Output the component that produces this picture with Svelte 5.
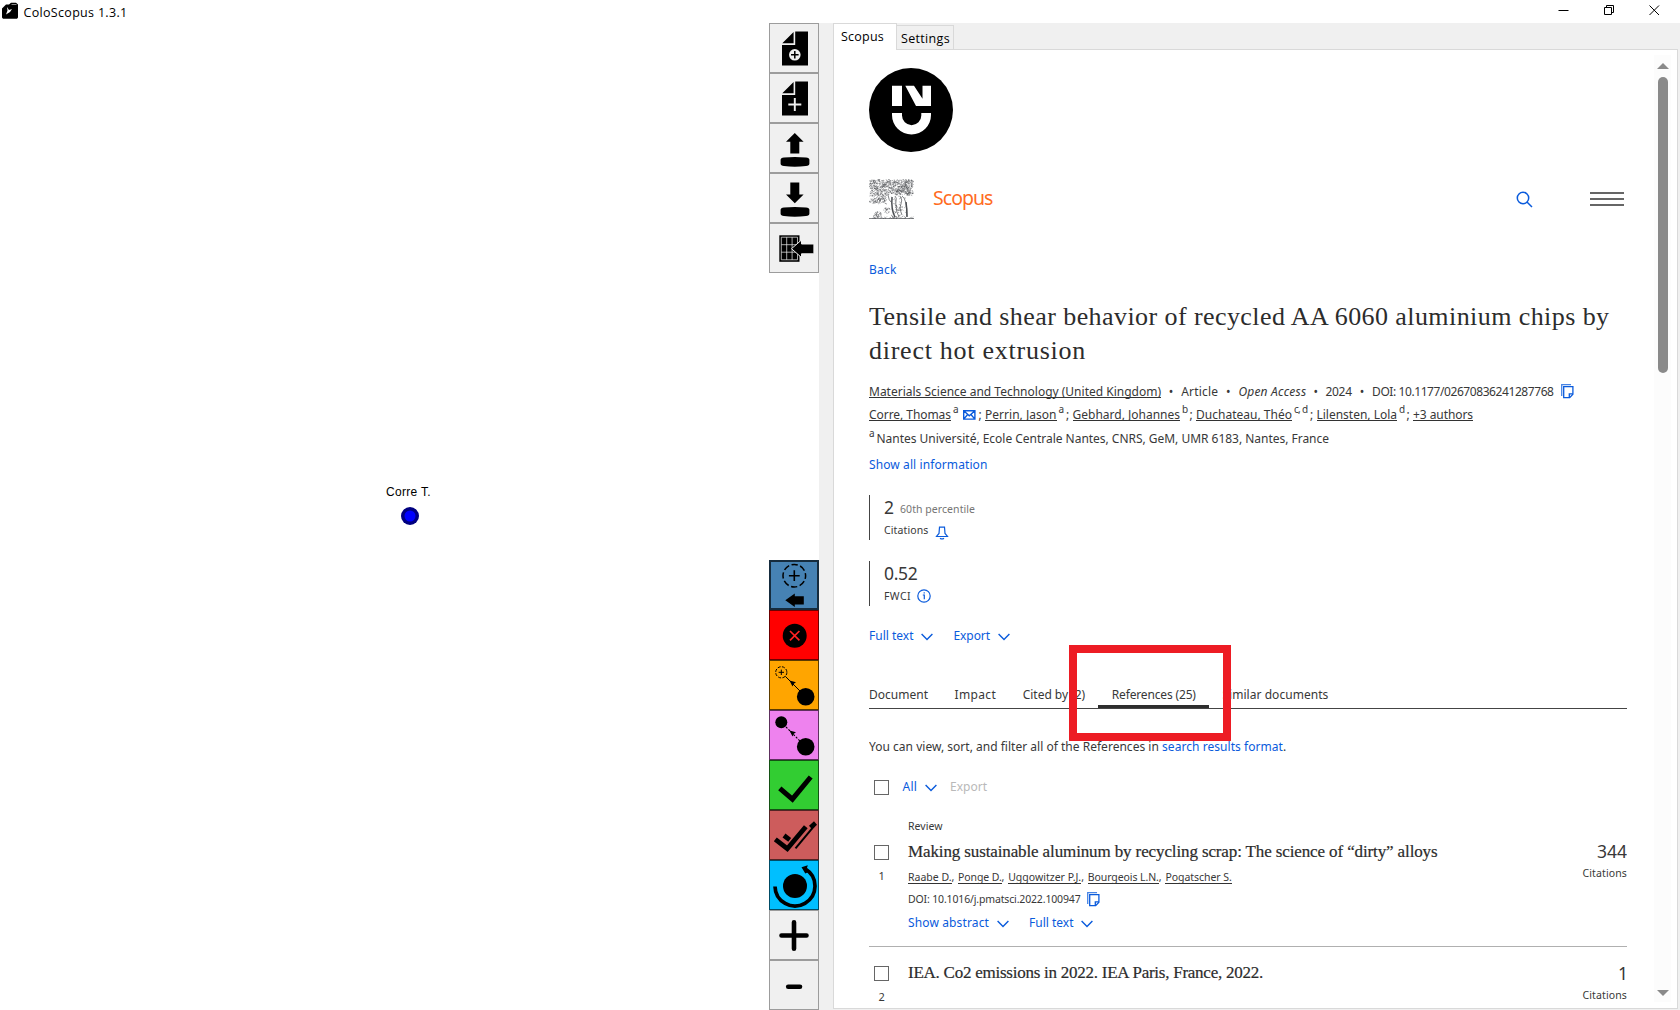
<script>
  // Spreads a label's letters so that it fills the given width.
  function fit(node, width) {
    const natural = node.getBoundingClientRect().width;
    const count = Array.from(node.textContent).length;
    node.style.letterSpacing = `${(width - natural) / count}px`;
    node.style.width = `${width}px`;
  }

  const fileTools = ['new', 'add', 'upload', 'download', 'import'];
  const graphTools = ['expand', 'remove', 'link', 'relink', 'check', 'checkall', 'reset', 'plus', 'minus'];

  const authors = [
    { name: 'Corre, Thomas', w: 82, sup: 'a', sw: 5, mail: true },
    { name: 'Perrin, Jason', w: 71.5, sup: 'a', sw: 5 },
    { name: 'Gebhard, Johannes', w: 107.5, sup: 'b', sw: 5 },
    { name: 'Duchateau, Théo', w: 96, sup: 'c, d', sw: 13.5 },
    { name: 'Lilensten, Lola', w: 80.5, sup: 'd', sw: 5 }
  ];

  const tabs = [
    { label: 'Document', w: 59 },
    { label: 'Impact', w: 41.5 },
    { label: 'Cited by (2)', w: 62.5 },
    { label: 'References (25)', w: 84, active: true },
    { label: 'Similar documents', w: 106 }
  ];

  const refAuthors = [
    { name: 'Raabe D.', w: 43.5 },
    { name: 'Ponge D.', w: 43.5 },
    { name: 'Uggowitzer P.J.', w: 73 },
    { name: 'Bourgeois L.N.', w: 71 },
    { name: 'Pogatscher S.', w: 66.5 }
  ];

  // Fine engraved strokes of the tree emblem.
  let seed = 7;
  const rnd = () => ((seed = (seed * 16807) % 2147483647) / 2147483647);
  function strokes(n, x, y, w, h) {
    let d = '';
    for (let i = 0; i < n; i++) {
      const a = x + rnd() * w;
      const b = y + rnd() * h;
      d += `M${a.toFixed(1)} ${b.toFixed(1)}q${(rnd() * 2 - 1).toFixed(1)} ${(rnd() * 2 - 1).toFixed(1)} ${(rnd() * 3 - 1.5).toFixed(1)} ${(rnd() * 3 - 1.5).toFixed(1)}`;
    }
    return d;
  }
  const leaves = strokes(560, 1, 1, 43, 14.5) + strokes(110, 1, 15, 17, 9) + strokes(16, 38, 14, 6, 3);
  const roots = strokes(50, 2, 37.5, 42, 2) + strokes(26, 5, 33, 7, 5) + strokes(18, 15, 29, 6, 5) + strokes(40, 22, 17, 15, 20);
</script>

{#snippet seg(text, width, cls = '')}
  <span class="seg {cls}" use:fit={width}>{text}</span>
{/snippet}

{#snippet chevron()}
  <svg class="chev" width="12" height="8" viewBox="0 0 12 8"><path d="M.6 1 6 6.6 11.4 1" /></svg>
{/snippet}

{#snippet copy()}
  <svg class="copy" width="13" height="15" viewBox="0 0 13 15">
    <path d="M.7 12V.7H10" opacity=".75" />
    <path d="M2.7 2.7h9.2v7.6l-3.2 3.3h-6z" />
    <path d="M8.3 13.4V9.9h3.5" />
  </svg>
{/snippet}

{#snippet toolIcon(kind)}
  <svg width="50" height="50" viewBox="0 0 50 50">
    {#if kind === 'new' || kind === 'add'}
      <path d="M13.3 20.3 24.6 9v11.3zM26.2 8.6H39v34H13V22h13.2z" />
      {#if kind === 'new'}
        <circle cx="25.8" cy="31.8" r="5.8" fill="#f0f0f0" />
        <path class="ln" stroke-width="1.5" d="M25.8 28v7.6M22 31.8h7.6" />
      {:else}
        <path class="ln pale" stroke-width="1.9" d="M25.8 25v13M19.3 31.5h13" />
      {/if}
    {:else if kind === 'upload'}
      <path d="m25.8 10 8.8 8.7h-4.3v11.7h-9V18.7H17zM15 34.6q10.5-1.4 22 0 3.4.5 3.4 2.2v4q0 1.7-3.4 2.2-11.5 1.4-22 0-3.4-.5-3.400-2.200v-4q0-1.700 3.400-2.200z" />
    {:else if kind === 'download'}
      <path d="m25.8 30.3 8.8-8.8h-4.3v-12h-9v12H17zM15 34.6q10.500-1.400 22 0 3.400.5 3.400 2.200v4q0 1.700-3.400 2.200-11.500 1.400-22 0-3.400-.5-3.400-2.200v-4q0-1.700 3.400-2.200z" />
    {:else if kind === 'import'}
      <path d="M10.3 12.3h20.2v26.5H10.3z" />
      <path class="ln pale" stroke-width=".7" d="M12.3 14.2h16.2v22.6H12.3zM17.7 14.2v22.6M23.1 14.2v22.6M12.3 21.7h16.2M12.3 29.2h16.2" />
      <path stroke="#f0f0f0" stroke-width="1" d="m22.5 25.7 10-8.7v4h12.4v9.8H32.5v3.7z" />
    {:else if kind === 'expand'}
      <circle class="ln" cx="25.3" cy="15.7" r="11.3" stroke-width="1.500" stroke-dasharray="6.300 2.570" stroke-dashoffset="3.100" />
      <path class="ln" stroke-width="1.600" d="M25.300 10.300v10.800M19.900 15.700h10.800" />
      <path d="m16.300 40.300 9.500-6.700v2.600h9v8.200h-9V47z" />
    {:else if kind === 'remove'}
      <circle cx="25.700" cy="25.700" r="12" />
      <path class="ln hot" stroke-width="1.700" d="m21 21 9.400 9.400M30.400 21 21 30.400" />
    {:else if kind === 'link' || kind === 'relink'}
      {#if kind === 'link'}
        <circle class="ln" cx="12.300" cy="12.300" r="5.600" stroke-width="1" stroke-dasharray="3 1.400" />
        <path class="ln" stroke-width="1" d="M12.300 9.600V15M9.600 12.300H15M16.300 16.300 32 32" />
      {:else}
        <circle cx="12.300" cy="12.300" r="6" />
        <path class="ln" stroke-width="1.100" stroke-dasharray="2 1.500" d="m17 17 15 15" />
      {/if}
      <path d="m20.500 20.500 6.500 1.800-2.200 1.500-1.300 2.800z" />
      <circle cx="36.700" cy="36.700" r="8.800" />
    {:else if kind === 'check'}
      <path class="ln" stroke-width="5" d="m10.800 28.400 12.600 10.800L41.700 17" />
    {:else if kind === 'checkall'}
      <path class="ln" stroke-width="4.800" d="m6.300 29.300 12 9.400 18.500-22" />
      <path class="ln" stroke-width="4.800" d="m15 25.500 5.700 4.300" />
      <path class="ln" stroke-width="2" d="m26.500 38.300 20-24" />
      <path class="ln" stroke-width="4.500" d="m41.500 17.500 5-4.500" />
    {:else if kind === 'reset'}
      <circle cx="26" cy="26" r="12" />
      <path class="ln" stroke-width="3.700" d="M6 26.500A20 20 0 1 0 36.500 9" />
      <path d="m32.500 7.200 6.300-2-1 3.200 1.700 3.600-3.200 1.400z" />
    {:else if kind === 'plus'}
      <path class="ln" stroke-linecap="round" stroke-width="4.600" d="M25 12.300v26.500M12.500 25.500h25" />
    {:else if kind === 'minus'}
      <path class="ln" stroke-linecap="round" stroke-width="4.600" d="M19.200 26.700H31" />
    {/if}
  </svg>
{/snippet}

<div class="window">
  <header class="titlebar">
    <svg width="18" height="18" viewBox="0 0 18 18">
      <path d="M1 6.500 5 2.500h3L10 .8h5l2 1.700v13l-1 1.300H2l-1-1.300z" />
      <path d="m6 5 2 3 3-1-2 3-4 2.500 1.500-4z" fill="#fff" />
      <path d="M10.500 2.500h5" stroke="#888" />
    </svg>
    {@render seg('ColoScopus 1.3.1', 104, 'apptitle')}
    <svg class="controls" width="102" height="12" viewBox="0 0 102 12">
      <path d="M.5 6.500h10M46.500 3.500h7v7h-7zM48.500 3.500v-2h7v7h-2" />
      <path d="m91.500 1.500 9.500 9.500M101 1.500 91.500 11" />
    </svg>
  </header>

  <main>
    <section class="canvas">
      <div class="node">
        {@render seg('Corre T.', 45)}
        <svg width="18" height="18" viewBox="0 0 18 18"><circle cx="9" cy="9" r="9" fill="#000080" /><circle cx="9" cy="9" r="5.500" fill="#00f" /></svg>
      </div>
    </section>

    <nav class="tools">
      <div>
        {#each fileTools as kind}<button class="tool">{@render toolIcon(kind)}</button>{/each}
      </div>
      <div>
        {#each graphTools as kind}<button class="tool {kind}">{@render toolIcon(kind)}</button>{/each}
      </div>
    </nav>

    <section class="side">
      <div class="apptabs">
        <div class="apptab on">{@render seg('Scopus', 43)}</div>
        <div class="apptab">{@render seg('Settings', 49)}</div>
      </div>

      <div class="panel">
        <div class="page">
          <svg class="logo" width="84" height="84" viewBox="0 0 84 84">
            <circle cx="42" cy="42" r="42" />
            <path fill="#fff" d="M23 17.700h10V38H23zM36.300 17.700H45l8.500 13V17.700H62V38H47zM23 45h10v2.500a9.650 9.650 0 0 0 19.300 0V45H62v2a19.500 19.500 0 0 1-39 0z" />
          </svg>

          <div class="brand">
            <svg width="45" height="40" viewBox="0 0 45 40" class="tree">
              <path d={leaves} />
              <path d={roots} />
              <path stroke-width=".7" d="M19 16q1 6 3 7M26 17q2 2 1 5t1 6M31 17q3 4 1 8t1 11M33 17q5 3 5 20M0 39.500h45M27 26q0 7 3 12M28 31h5" />
              <path stroke-width="1.500" d="M37 23q1 7 1 15M23 18q-1 13 3 20" />
            </svg>
            {@render seg('Scopus', 59.5, 'scopus')}
            <svg class="search" width="17" height="17" viewBox="0 0 17 17"><circle cx="7" cy="7" r="5.700" /><path d="m11 11 5 5" /></svg>
            <div class="burger"><i></i><i></i><i></i></div>
          </div>

          <div class="row back link">{@render seg('Back', 27.5)}</div>

          <h1>
            {@render seg('Tensile and shear behavior of recycled AA 6060 aluminium chips by', 740.5)}
            {@render seg('direct hot extrusion', 217)}
          </h1>

          <div class="row meta">
            {@render seg('Materials Science and Technology (United Kingdom)', 292, 'u')}
            <b>•</b>{@render seg('Article', 37)}
            <b>•</b>{@render seg('Open Access', 68, 'it')}
            <b class="tight">•</b>{@render seg('2024', 26.5)}
            <b>•</b>{@render seg('DOI: 10.1177/02670836241287768', 181.5)}
            {@render copy()}
          </div>

          <div class="row authors">
            {#each authors as a}
              {@render seg(a.name, a.w, 'u')}
              <span class="sup">{@render seg(a.sup, a.sw)}</span>
              {#if a.mail}
                <svg class="mail" width="13" height="10" viewBox="0 0 13 10"><path d="M.7.700h11.200v8.400H.700zM.7.700l5.600 5 5.600-5M.7 9.100l4-4.600M11.900 9.100l-4-4.600" /></svg>
              {/if}
              <span class="semi">;</span>
            {/each}
            {@render seg('+3 authors', 60, 'u')}
          </div>

          <div class="row affil">
            <span class="sup">{@render seg('a', 5)}</span>
            {@render seg('Nantes Université, Ecole Centrale Nantes, CNRS, GeM, UMR 6183, Nantes, France', 452.5)}
          </div>

          <div class="row showall link">{@render seg('Show all information', 118.5)}</div>

          <div class="stat">
            <div class="value">{@render seg('2', 9, 'num')}{@render seg('60th percentile', 75, 'small grey')}</div>
            <div class="label">
              {@render seg('Citations', 44.500, 'small')}
              <svg class="bell" width="14" height="14" viewBox="0 0 14 14"><path d="M.7 10.500h12.600M1.500 10.300 4 7.500 4.500 1.200h5L10 7.500l2.500 2.800M5 12.200q2 1.500 4 0" /></svg>
            </div>
          </div>

          <div class="stat">
            <div class="value">{@render seg('0.52', 33.5, 'num')}</div>
            <div class="label">
              {@render seg('FWCI', 27, 'small')}
              <svg class="info" width="14" height="14" viewBox="0 0 14 14"><circle cx="7" cy="7" r="6.200" /><path d="M5.800 6h1.500v4.300M7.200 3.300v1.300" /></svg>
            </div>
          </div>

          <div class="row actions link">
            {@render seg('Full text', 44.5)}{@render chevron()}
            <span class="next"></span>
            {@render seg('Export', 36.5)}{@render chevron()}
          </div>

          <div class="tabs">
            {#each tabs as t}
              <div class="tab" class:active={t.active}>{@render seg(t.label, t.w)}</div>
            {/each}
            <div class="highlight"></div>
          </div>

          <div class="row note">
            {@render seg('You can view, sort, and filter all of the References in ', 293)}{@render seg('search results format', 121, 'link')}<span>.</span>
          </div>

          <div class="row bulk">
            <span class="box"></span>
            {@render seg('All', 14.5, 'link')}{@render chevron()}
            {@render seg('Export', 37, 'off')}
          </div>

          <article>
            <div class="pick"><span class="box"></span>{@render seg('1', 6)}</div>
            <div class="body">
              <div class="line">{@render seg('Review', 34.5)}</div>
              <h2>{@render seg('Making sustainable aluminum by recycling scrap: The science of “dirty” alloys', 529.5)}</h2>
              <div class="line names">
                {#each refAuthors as a, i}
                  {@render seg(a.name, a.w, 'u')}{#if i < refAuthors.length - 1}<span class="comma">,</span>{/if}
                {/each}
              </div>
              <div class="line doi">{@render seg('DOI: 10.1016/j.pmatsci.2022.100947', 172.5)}{@render copy()}</div>
              <div class="row more link">
                {@render seg('Show abstract', 81)}{@render chevron()}
                <span class="next"></span>
                {@render seg('Full text', 44.5)}{@render chevron()}
              </div>
            </div>
            <div class="cited">{@render seg('344', 30, 'num')}{@render seg('Citations', 44.500, 'small')}</div>
          </article>

          <article class="second">
            <div class="pick"><span class="box"></span>{@render seg('2', 6)}</div>
            <div class="body">
              <h2>{@render seg('IEA. Co2 emissions in 2022. IEA Paris, France, 2022.', 355)}</h2>
            </div>
            <div class="cited">{@render seg('1', 9, 'num')}{@render seg('Citations', 44.500, 'small')}</div>
          </article>
        </div>

        <div class="scroll">
          <svg width="12" height="6" viewBox="0 0 12 6"><path d="M6 0l6 6H0z" /></svg>
          <div class="thumb"></div>
          <svg width="12" height="6" viewBox="0 0 12 6"><path d="M0 0h12L6 6z" /></svg>
        </div>
      </div>
    </section>
  </main>
</div>

<style>
  :global(body) { margin: 0; overflow: hidden; }
  .window {
    width: 1680px; height: 1010px; display: flex; flex-direction: column;
    background: #fff; color: #383838; overflow: hidden;
    font: 12px/20px 'Noto Sans', sans-serif;
  }
  .seg { display: inline-block; white-space: pre; flex: none; }
  svg { display: block; flex: none; }
  .link { color: #0a5bdc; }

  .titlebar { height: 23px; display: flex; align-items: flex-start; padding: 2px 20px 0 1px; box-sizing: border-box; color: #000; }
  .titlebar .apptitle { font: 12.5px/22px 'Open Sans', sans-serif; margin-left: 4.5px; }
  .controls { margin: 2px 0 0 auto; fill: none; stroke: #000; stroke-width: 1; }

  main { flex: 1; display: flex; min-height: 0; }
  .canvas { width: 769px; position: relative; }
  .node {
    position: absolute; left: 386px; top: 459px; display: flex; flex-direction: column;
    align-items: center; color: #000; font: 12px/20px 'Liberation Sans', sans-serif;
  }
  .node svg { margin: 5px 0 0 2px; }

  .tools { width: 50px; display: flex; flex-direction: column; justify-content: space-between; }
  .tool { display: block; width: 50px; height: 50px; padding: 0; border: 1px solid #9c9c9c; background: #f0f0f0; box-sizing: border-box; }
  .tool svg { margin: -1px; fill: #000; }
  .ln { fill: none; stroke: #000; }
  .ln.pale { stroke: #f0f0f0; }
  .ln.hot { stroke: #f22; }
  .tool.expand { background: #4682b4; border: 2px solid #162c3e; }
  .tool.expand svg { margin: -2px; }
  .tool.remove { background: #f00; border-color: #6b0000; }
  .tool.link { background: #ffa500; border-color: #5b3b00; }
  .tool.relink { background: #ee82ee; border-color: #5d2f5d; }
  .tool.check { background: #32cd32; border-color: #145214; }
  .tool.checkall { background: #cd5c5c; border-color: #522525; }
  .tool.reset { background: #00bfff; border-color: #004c66; }

  .side { flex: 1; background: #f0f0f0; padding: 0 2px 1px 14px; display: flex; flex-direction: column; min-height: 0; }
  .apptabs { height: 26px; display: flex; align-items: flex-end; color: #000; font: 12.5px/20px 'Open Sans', sans-serif; }
  .apptab { height: 24px; width: 57px; box-sizing: border-box; border: 1px solid #d9d9d9; border-left: 0; border-bottom: 0; padding: 3px 0 0 4px; }
  .apptab.on { width: 64px; height: 27px; background: #fff; border-left: 1px solid #d9d9d9; margin-bottom: -1px; padding: 3px 0 0 7px; z-index: 1; }
  .panel { flex: 1; min-height: 0; background: #fff; border: 1px solid #d9d9d9; display: flex; justify-content: space-between; }
  .page { width: 758px; margin-left: 35px; height: 958px; overflow: hidden; }

  .logo { margin-top: 18px; }
  .brand { display: flex; margin-top: 27px; height: 40px; }
  .tree { fill: none; stroke: #4a4d51; stroke-width: .5; }
  .scopus { color: #ff6c1f; font-size: 19.5px; line-height: 40px; margin-left: 19px; margin-top: -1px; }
  .search { margin: 12px 1px 0 auto; fill: none; stroke: #0a5bdc; stroke-width: 1.5; }
  .burger { margin: 13px 3px 0 56px; width: 34px; }
  .burger i { display: block; height: 2px; background: #666; margin-bottom: 4px; }

  .row { display: flex; height: 20px; line-height: 22px; align-items: flex-start; }
  .back { margin-top: 40px; }
  h1 { margin: 21px 0 0; font: 26px/34px 'Liberation Serif', serif; height: 68px; color: #2c2c2c; display: flex; flex-direction: column; align-items: flex-start; }
  .u { height: 16px; border-bottom: 1px solid #333; }
  .it { font-style: italic; }
  .meta { margin-top: 13px; }
  .meta b { width: 20.2px; text-align: center; font-weight: 400; flex: none; }
  .meta b.tight { width: 19px; }
  .copy { fill: none; stroke: #0a5bdc; stroke-width: 1.3; margin: 3px 0 0 7px; }
  .authors { margin-top: 3px; }
  .sup { font-size: 10px; line-height: 12px; margin-left: 2px; }
  .authors .sup { margin-top: -1px; }
  .mail { fill: none; stroke: #0a5bdc; stroke-width: 1.4; margin: 6px 0 0 5px; }
  .semi { width: 6.5px; padding-left: 2.5px; }
  .affil { margin-top: 4px; }
  .affil .sup { margin: -1px 2.5px 0 0; }
  .showall { margin-top: 6px; }

  .stat { height: 45px; margin-top: 21px; border-left: 1px solid #444; padding-left: 14px; }
  .value { height: 24px; display: flex; line-height: 25px; }
  .num { font-size: 17.5px; }
  .small { font-size: 10.5px; }
  .grey { color: #757575; margin: 2px 0 0 7px; line-height: 24px; }
  .label { display: flex; line-height: 20px; margin-top: 1px; }
  .label svg { fill: none; stroke: #0a5bdc; stroke-width: 1.2; margin: 6px 0 0 6px; }
  .label svg.info { margin: 3px 0 0 6px; }

  .actions { margin-top: 19px; }
  .chev { fill: none; stroke: #0a5bdc; stroke-width: 1.4; margin: 8px 0 0 7.5px; }
  .next { width: 20.5px; }

  .tabs { margin-top: 39px; height: 24px; line-height: 22px; border-bottom: 1px solid #444; display: flex; gap: 26.6px; position: relative; }
  .tab { height: 24px; position: relative; }
  .tab.active::after { content: ''; position: absolute; left: -14px; right: -13px; bottom: 0; height: 3px; background: #2e2e2e; }
  .highlight { position: absolute; left: 200px; top: -39px; width: 162px; height: 96px; box-sizing: border-box; border: 8px solid #ed1c24; }
  .note { margin-top: 27px; }
  .bulk { margin-top: 20px; }
  .box { display: block; width: 15px; height: 15px; box-sizing: border-box; border: 1px solid #666; flex: none; }
  .bulk .box { margin: 4px 13.5px 0 5px; }
  .off { color: #b9b9b9; margin-left: 13.5px; }

  article { display: flex; padding: 22px 0 14px; border-bottom: 1px solid #b0b0b0; }
  .pick { width: 39px; padding: 27px 0 0 5px; box-sizing: border-box; flex: none; font-size: 11px; }
  .pick .seg { margin: 6px 0 0 4.5px; line-height: 20px; }
  .body { flex: 1; }
  .line { height: 16px; font-size: 10.5px; line-height: 16px; display: flex; }
  h2 { margin: 6px 0 0; height: 24px; font: 17px/24px 'Liberation Serif', serif; color: #2c2c2c; -webkit-text-stroke: .2px #2c2c2c; }
  .names { margin-top: 5px; }
  .names .u { height: 14px; }
  .comma { width: 6.6px; }
  .doi { margin-top: 6px; }
  .doi .copy { margin: 1px 0 0 6px; }
  .more { margin-top: 5px; }
  .cited { display: flex; flex-direction: column; align-items: flex-end; padding-top: 21px; }
  .cited .num { line-height: 24px; }
  .cited .small { line-height: 16px; margin-top: 2px; }
  .second { padding: 14px 0 0; border: 0; }
  .second h2 { margin-top: 0; }
  .second .pick { padding-top: 5px; }
  .second .cited { padding-top: 0; }

  .scroll { width: 17px; margin: 5px 6px 6px 0; background: #fcfcfc; display: flex; flex-direction: column; align-items: center; }
  .scroll svg { fill: #8a8a8a; margin: 8px 0 6px; }
  .thumb { width: 10px; height: 296px; border-radius: 5px; background: #8a8a8a; margin: 2px 0 auto; }
</style>
